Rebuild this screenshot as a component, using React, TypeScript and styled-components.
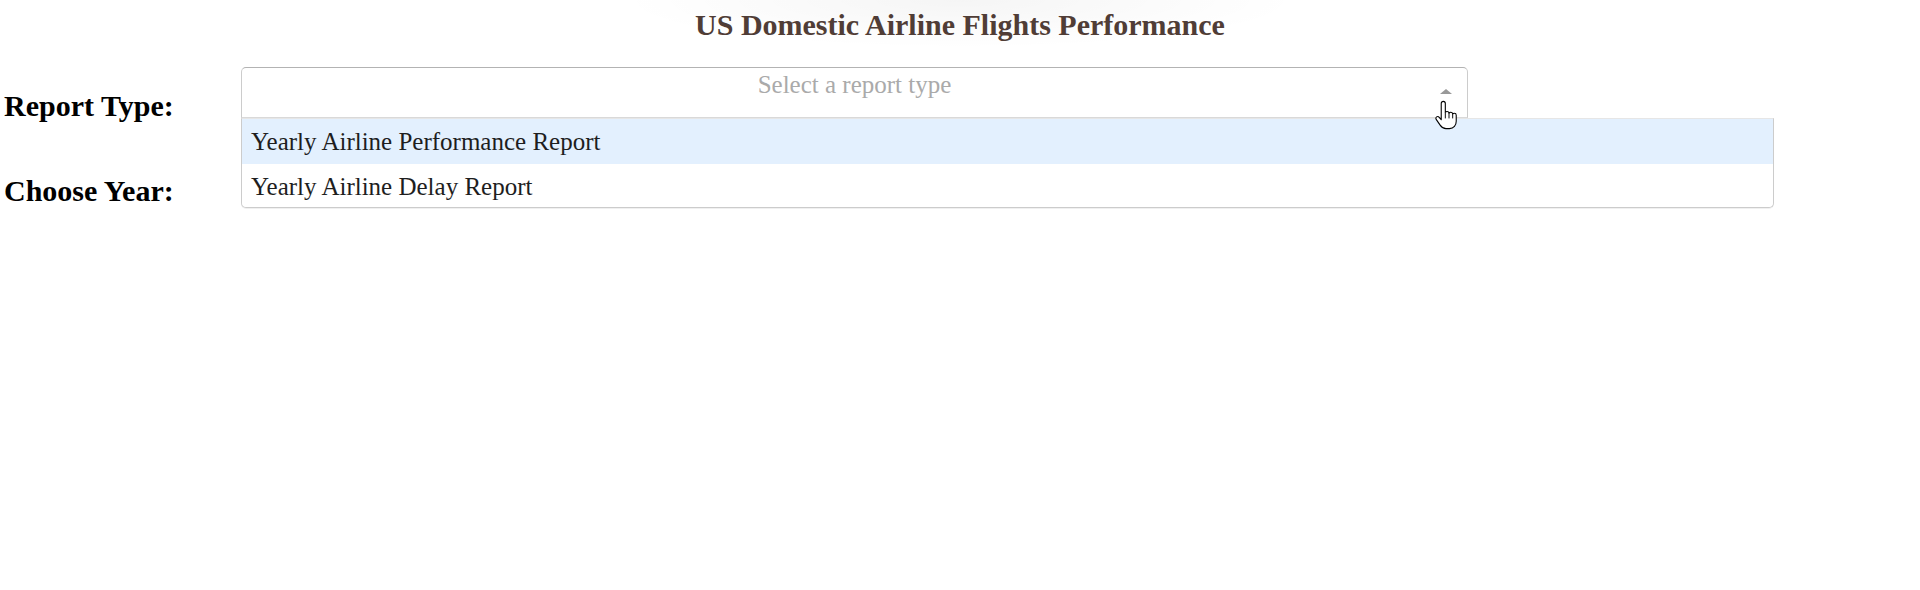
import React from "react";
import styled, { createGlobalStyle } from "styled-components";

const GlobalStyle = createGlobalStyle`
  html, body {
    margin: 0;
    padding: 0;
    background: #ffffff;
    font-family: "Liberation Serif", "Times New Roman", serif;
  }
`;

const Page = styled.div`
  position: relative;
  width: 1920px;
  height: 590px;
  background: #ffffff;
`;

const Header = styled.header`
  padding-top: 8px;
  height: 60px;
  box-sizing: border-box;
  background: radial-gradient(
    ellipse 340px 48px at 960px 0px,
    rgba(0, 0, 0, 0.04),
    rgba(0, 0, 0, 0) 100%
  );
`;

const Title = styled.h1`
  margin: 0;
  text-align: center;
  color: #503d36;
  font-size: 30px;
  font-weight: bold;
  line-height: 34px;
`;

const Form = styled.div`
  display: flex;
  flex-direction: column;
  padding-top: 7px;
`;

const Row = styled.div<{ $gap?: number }>`
  display: flex;
  align-items: flex-start;
  margin-top: ${(p) => p.$gap ?? 0}px;
`;

const Label = styled.div<{ $offset: number }>`
  flex: 0 0 241px;
  box-sizing: border-box;
  padding-left: 4px;
  padding-top: ${(p) => p.$offset}px;
  font-size: 30px;
  font-weight: bold;
  line-height: 34px;
  color: #000;
`;

const SelectWrap = styled.div`
  position: relative;
  width: 1227px;
`;

const Control = styled.div`
  display: flex;
  align-items: flex-start;
  height: 51px;
  box-sizing: border-box;
  border: 1px solid #c6c6c6;
  border-color: #b3b3b3 #cccccc #d9d9d9;
  border-radius: 5px 5px 0 0;
  background: #fff;
`;

const Placeholder = styled.div`
  flex: 1;
  text-align: center;
  padding-left: 48px;
  padding-top: 1px;
  font-size: 25px;
  line-height: 31px;
  color: #aaaaaa;
`;

const ArrowZone = styled.div`
  flex: 0 0 48px;
  box-sizing: border-box;
  display: flex;
  justify-content: flex-end;
  padding-top: 21px;
  padding-right: 15px;
`;

const Arrow = styled.span`
  display: block;
  width: 0;
  height: 0;
  border-style: solid;
  border-width: 0 6px 5px;
  border-color: transparent transparent #999999;
`;

const Menu = styled.div`
  position: absolute;
  top: 51px;
  left: 0;
  width: 1533px;
  box-sizing: border-box;
  border: 1px solid #cccccc;
  border-top-color: #e6e6e6;
  border-radius: 0 0 5px 5px;
  background: #fff;
  box-shadow: 0 1px 0 rgba(0, 0, 0, 0.06);
  z-index: 2;
`;

const MenuList = styled.div`
  max-height: 88px;
  overflow: hidden;
  border-radius: 0 0 5px 5px;
`;

const Option = styled.div<{ $focused?: boolean }>`
  height: 45px;
  padding: 0 9px;
  font-size: 25px;
  line-height: 45px;
  color: #1e1e1e;
  background: ${(p) => (p.$focused ? "#e3f0fe" : "#ffffff")};
  white-space: nowrap;
`;

const Cursor = styled.svg`
  position: absolute;
  left: 1433px;
  top: 100px;
  z-index: 3;
  pointer-events: none;
`;

export default function App() {
  return (
    <>
      <GlobalStyle />
      <Page>
        <Header>
          <Title>US Domestic Airline Flights Performance</Title>
        </Header>
        <Form>
          <Row>
            <Label $offset={22}>Report Type:</Label>
            <SelectWrap>
              <Control>
                <Placeholder>Select a report type</Placeholder>
                <ArrowZone>
                  <Arrow />
                </ArrowZone>
              </Control>
              <Menu>
                <MenuList>
                  <Option $focused>Yearly Airline Performance Report</Option>
                  <Option>Yearly Airline Delay Report</Option>
                </MenuList>
              </Menu>
            </SelectWrap>
          </Row>
          <Row $gap={51}>
            <Label $offset={0}>Choose Year:</Label>
          </Row>
        </Form>
        <Cursor width="26" height="30" viewBox="0 0 17 22" aria-hidden="true">
          <path
            d="M6.5 1 C7.4 1 8 1.6 8 2.5 V9 C8.3 8.6 8.8 8.4 9.3 8.4 C10 8.4 10.6 8.9 10.7 9.6 C11 9.2 11.5 9 12 9 C12.7 9 13.3 9.5 13.4 10.2 C13.7 9.9 14.1 9.7 14.6 9.7 C15.4 9.7 16 10.3 16 11.1 V15.5 C16 18.5 14.2 21 11 21 H8.5 C6.5 21 5.3 20 4.2 18.4 L1.3 14.2 C0.9 13.6 1 12.8 1.6 12.4 C2.2 12 3 12.1 3.5 12.7 L5 14.5 V2.5 C5 1.6 5.6 1 6.5 1 Z"
            fill="#ffffff"
            stroke="#000000"
            strokeWidth="0.8"
            strokeLinejoin="round"
          />
          <path d="M10.7 9.6 V13.5 M13.4 10.2 V13.5 M8 9 V13.5" stroke="#000" strokeWidth="0.7" fill="none" />
        </Cursor>
      </Page>
    </>
  );
}
